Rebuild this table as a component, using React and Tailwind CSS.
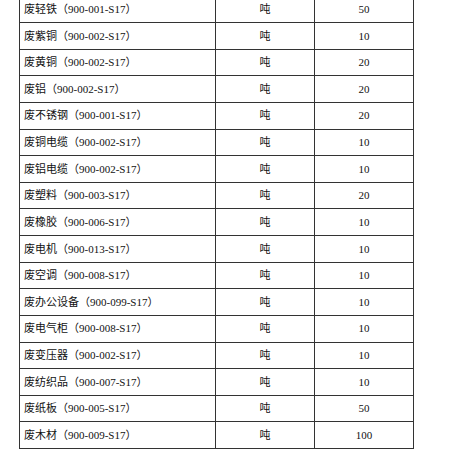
import React from "react";

const rows = [
  ["废轻铁（900-001-S17）", "50"],
  ["废紫铜（900-002-S17）", "10"],
  ["废黄铜（900-002-S17）", "20"],
  ["废铝（900-002-S17）", "20"],
  ["废不锈钢（900-001-S17）", "20"],
  ["废铜电缆（900-002-S17）", "10"],
  ["废铝电缆（900-002-S17）", "10"],
  ["废塑料（900-003-S17）", "20"],
  ["废橡胶（900-006-S17）", "10"],
  ["废电机（900-013-S17）", "10"],
  ["废空调（900-008-S17）", "10"],
  ["废办公设备（900-099-S17）", "10"],
  ["废电气柜（900-008-S17）", "10"],
  ["废变压器（900-002-S17）", "10"],
  ["废纺织品（900-007-S17）", "10"],
  ["废纸板（900-005-S17）", "50"],
  ["废木材（900-009-S17）", "100"],
];

export default function App() {
  return (
    <div className="w-[450px] h-[450px] overflow-hidden bg-white">
      <div
        className="mt-[-4.625px] ml-[19px] w-[395px] border-l border-t border-[#333] text-[11px] text-[#111]"
        style={{ fontFamily: '"Liberation Serif", "Noto Sans CJK SC", serif' }}
      >
        {rows.map(([name, qty], i) => (
          <div key={i} className="flex h-[26.625px] border-b border-[#333]">
            <div className="w-[196px] border-r border-[#333] flex items-center pl-[4px]">
              {name}
            </div>
            <div className="w-[99px] border-r border-[#333] flex items-center justify-center">
              吨
            </div>
            <div className="w-[99px] border-r border-[#333] flex items-center justify-center">
              {qty}
            </div>
          </div>
        ))}
      </div>
    </div>
  );
}
